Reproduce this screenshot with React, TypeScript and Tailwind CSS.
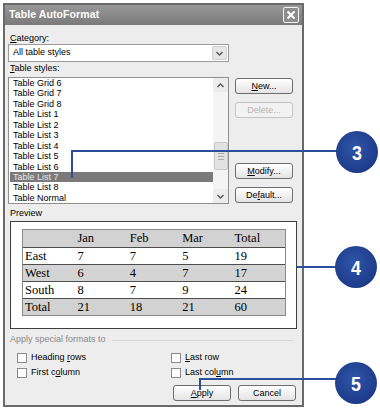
import React from "react";

const items = [
  "Table Grid 6",
  "Table Grid 7",
  "Table Grid 8",
  "Table List 1",
  "Table List 2",
  "Table List 3",
  "Table List 4",
  "Table List 5",
  "Table List 6",
  "Table List 7",
  "Table List 8",
  "Table Normal",
];

const rows = [
  { cells: ["", "Jan", "Feb", "Mar", "Total"], bg: "bg-[#d2d2d2]" },
  { cells: ["East", "7", "7", "5", "19"], bg: "bg-white" },
  { cells: ["West", "6", "4", "7", "17"], bg: "bg-[#d4d4d4]" },
  { cells: ["South", "8", "7", "9", "24"], bg: "bg-white" },
  { cells: ["Total", "21", "18", "21", "60"], bg: "bg-[#d2d2d2]" },
];

function Chevron({ up = false }: { up?: boolean }) {
  return (
    <svg width="7" height="5" viewBox="0 0 7 5">
      <path
        d={up ? "M0.5 4 L3.5 1 L6.5 4" : "M0.5 1 L3.5 4 L6.5 1"}
        fill="none"
        stroke="#555"
        strokeWidth="1.4"
      />
    </svg>
  );
}

function Btn({
  children,
  disabled = false,
}: {
  children: React.ReactNode;
  disabled?: boolean;
}) {
  return (
    <div
      className={
        "w-[58px] h-[16px] rounded-[3px] border flex items-center justify-center leading-none " +
        (disabled
          ? "border-[#c4c4c4] text-[#b5b5b5] bg-[#f2f2f2]"
          : "border-[#6e6e6e] text-black bg-gradient-to-b from-white to-[#e4e4e4]")
      }
    >
      {children}
    </div>
  );
}

function Check({ children }: { children: React.ReactNode }) {
  return (
    <div className="h-[15px] flex items-center">
      <div className="w-[10px] h-[10px] border border-[#8a8a8a] bg-white" />
      <span className="ml-[4px]">{children}</span>
    </div>
  );
}

function Circle({ n, left, top }: { n: string; left: number; top: number }) {
  return (
    <div
      className="absolute w-[42px] h-[42px] rounded-full bg-[radial-gradient(circle_at_45%_40%,#2f55a8_0%,#1f3d8c_65%,#18316f_100%)] flex items-center justify-center text-white font-bold text-[21px] leading-none font-['Liberation_Sans',Arial,sans-serif]"
      style={{ left, top }}
    >
      <span className="scale-x-[0.85] inline-block">{n}</span>
    </div>
  );
}

export default function App() {
  return (
    <div className="relative w-[380px] h-[412px] bg-white overflow-hidden text-[9px] text-black font-['Liberation_Sans',Arial,sans-serif]">
      <div className="ml-[3px] mt-[3px] w-[301px] h-[404px] border-2 border-[#6a6a6a] bg-[#ededed] flex flex-col">
        {/* title bar */}
        <div className="h-[20px] bg-gradient-to-b from-[#989898] to-[#7a7a7a] flex items-center justify-between pl-[4px] pr-[3px]">
          <span className="text-white font-bold text-[10.5px] tracking-[0.1px]">
            Table AutoFormat
          </span>
          <div className="w-[16px] h-[16px] rounded-[2px] border border-[#f4f4f4] bg-[#8d8d8d] flex items-center justify-center">
            <svg width="10" height="10" viewBox="0 0 10 10">
              <path d="M1.5 1.5 L8.5 8.5 M8.5 1.5 L1.5 8.5" stroke="white" strokeWidth="2" />
            </svg>
          </div>
        </div>

        {/* body */}
        <div className="flex flex-col pl-[3px] pr-[4px] pt-[7px]">
          <div className="h-[12px] leading-[12px] ml-[2px]">
            <span className="underline">C</span>ategory:
          </div>
          <div className="w-[221px] h-[18px] border border-[#9a9a9a] bg-white flex items-center justify-between pl-[4px] pr-[1px]">
            <span>All table styles</span>
            <div className="w-[15px] h-[14px] bg-[#e6e6e6] border border-[#cfcfcf] rounded-[2px] flex items-center justify-center">
              <Chevron />
            </div>
          </div>
          <div className="h-[12px] leading-[12px] ml-[2px]">
            <span className="underline">T</span>able styles:
          </div>

          <div className="mt-[3px] h-[127px] flex">
            <div className="w-[221px] h-full border border-[#8f8f8f] bg-white flex">
              <div className="flex-1 flex flex-col pt-[0px]">
                {items.map((it) => (
                  <div
                    key={it}
                    className={
                      "h-[10.45px] leading-[10.45px] pl-[3px] ml-[1px] " +
                      (it === "Table List 7" ? "bg-[#7a7a7a] text-[#e8e8e8]" : "")
                    }
                  >
                    {it}
                  </div>
                ))}
              </div>
              <div className="w-[15px] h-full bg-[#f4f4f4] flex flex-col items-center">
                <div className="w-[15px] h-[14px] flex items-center justify-center bg-[#ececec]">
                  <Chevron up />
                </div>
                <div className="mt-[50px] w-[14px] h-[28px] bg-[#e2e2e2] border border-[#c8c8c8] rounded-[2px] flex flex-col items-center justify-center gap-[2px]">
                  <div className="w-[6px] h-[1px] bg-[#aaa]" />
                  <div className="w-[6px] h-[1px] bg-[#aaa]" />
                  <div className="w-[6px] h-[1px] bg-[#aaa]" />
                </div>
                <div className="mt-auto w-[15px] h-[14px] flex items-center justify-center bg-[#ececec]">
                  <Chevron />
                </div>
              </div>
            </div>
            <div className="ml-[6px] flex flex-col">
              <div className="mt-[1px]">
                <Btn>
                  <span className="underline">N</span>ew...
                </Btn>
              </div>
              <div className="mt-[8px]">
                <Btn disabled>Delete...</Btn>
              </div>
              <div className="mt-[45px]">
                <Btn>
                  <span className="underline">M</span>odify...
                </Btn>
              </div>
              <div className="mt-[8px]">
                <Btn>
                  De<span className="underline">f</span>ault...
                </Btn>
              </div>
            </div>
          </div>

          <div className="mt-[3px] h-[12px] leading-[12px] ml-[2px]">Preview</div>
          <div className="mt-[2px] ml-[2px] w-[287px] h-[108px] border-[1.5px] border-[#3f3f3f] bg-white pt-[7px] pl-[11px]">
            <div className="w-[264px] border border-[#8a8a8a] font-['Liberation_Serif','Times_New_Roman',serif] text-[12.5px]">
              {rows.map((r, i) => (
                <div
                  key={i}
                  className={
                    "grid grid-cols-5 h-[17px] items-center " +
                    r.bg +
                    (i > 0 ? " border-t border-[#4d4d4d]" : "")
                  }
                >
                  {r.cells.map((c, j) => (
                    <div key={j} className="pl-[2px] leading-none">
                      {c}
                    </div>
                  ))}
                </div>
              ))}
            </div>
          </div>

          <div className="mt-[5px] h-[12px] flex items-center ml-[2px] text-[#8a8a8a]">
            <span>Apply special formats to</span>
            <div className="flex-1 h-[1px] bg-[#d8d8d8] ml-[6px] mr-[4px]" />
          </div>
          <div className="mt-[4px] grid grid-cols-[154px_1fr] ml-[9px]">
            <Check>
              Heading <span className="underline">r</span>ows
            </Check>
            <Check>
              <span className="underline">L</span>ast row
            </Check>
            <Check>
              First c<span className="underline">o</span>lumn
            </Check>
            <Check>
              Last col<span className="underline">u</span>mn
            </Check>
          </div>
          <div className="mt-[5px] flex justify-end gap-[7px] pr-[2px]">
            <Btn>
              <span className="underline">A</span>pply
            </Btn>
            <Btn>Cancel</Btn>
          </div>
        </div>
      </div>

      {/* annotations */}
      <div className="absolute left-[71px] top-[150px] w-[2px] h-[28px] bg-[#2b4f9a]" />
      <div className="absolute left-[71px] top-[150px] w-[270px] h-[2px] bg-[#2b4f9a]" />
      <Circle n="3" left={336} top={131} />

      <div className="absolute left-[297px] top-[266px] w-[44px] h-[2px] bg-[#2b4f9a]" />
      <Circle n="4" left={335} top={246} />

      <div className="absolute left-[199px] top-[378px] w-[2px] h-[12px] bg-[#2b4f9a]" />
      <div className="absolute left-[199px] top-[378px] w-[142px] h-[2px] bg-[#2b4f9a]" />
      <Circle n="5" left={335} top={362} />
    </div>
  );
}
